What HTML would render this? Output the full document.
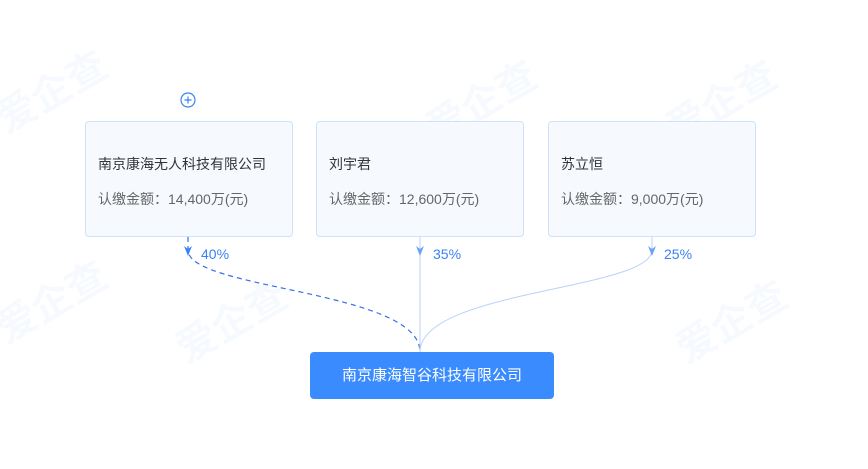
<!DOCTYPE html>
<html><head><meta charset="utf-8"><style>
body{margin:0;width:868px;height:469px;background:#fff;position:relative;overflow:hidden;font-family:"Liberation Sans","Noto Sans CJK SC",sans-serif}
.card{position:absolute;top:121px;width:208px;height:116px;border:1.5px solid #cfe2fb;border-radius:4px;background:#f6faff;box-sizing:border-box}
.card .n{position:absolute;left:12px;top:32px;font-size:14px;color:#333}
.card .a{position:absolute;left:12px;top:67px;font-size:14px;color:#666}
.pct{position:absolute;top:246px;font-size:14px;color:#3b82f6}
.main{position:absolute;left:310px;top:352px;width:244px;height:47px;background:#3a8bfd;border-radius:4px;color:#fff;font-size:15px;text-align:center;line-height:47px}
.wm{position:absolute;font-size:40px;font-weight:bold;color:#2f7be8;opacity:.035;transform:rotate(-30deg)}
</style></head><body>
<div class="wm" style="left:-10px;top:60px">爱企查</div>
<div class="wm" style="left:170px;top:290px">爱企查</div>
<div class="wm" style="left:420px;top:70px">爱企查</div>
<div class="wm" style="left:660px;top:70px">爱企查</div>
<div class="wm" style="left:670px;top:290px">爱企查</div>
<div class="wm" style="left:-10px;top:270px">爱企查</div>
<svg width="868" height="469" style="position:absolute;left:0;top:0">
<circle cx="188" cy="100" r="7" fill="#fff" stroke="#3b82f6" stroke-width="1.2"/>
<path d="M184.5 100H191.5M188 96.5V103.5" stroke="#3b82f6" stroke-width="1.2"/>
<path d="M188 237 V250 C188 290 420 290 420 352" fill="none" stroke="#3b6ee8" stroke-width="1.2" stroke-dasharray="5 4"/>
<path d="M420 237 V352" fill="none" stroke="#b9d3f7" stroke-width="1"/>
<path d="M652 237 V250 C652 290 420 290 420 352" fill="none" stroke="#b9d3f7" stroke-width="1"/>
<path d="M184 246 L188 256 L192 246 L188 249Z" fill="#3b82f6"/>
<path d="M416 246 L420 256 L424 246 L420 249Z" fill="#6aa3f5"/>
<path d="M648 246 L652 256 L656 246 L652 249Z" fill="#6aa3f5"/>
</svg>
<div class="card" style="left:85px"><div class="n">南京康海无人科技有限公司</div><div class="a">认缴金额：14,400万(元)</div></div>
<div class="card" style="left:316px"><div class="n">刘宇君</div><div class="a">认缴金额：12,600万(元)</div></div>
<div class="card" style="left:548px"><div class="n">苏立恒</div><div class="a">认缴金额：9,000万(元)</div></div>
<div class="pct" style="left:201px">40%</div>
<div class="pct" style="left:433px">35%</div>
<div class="pct" style="left:664px">25%</div>
<div class="main">南京康海智谷科技有限公司</div>
</body></html>
